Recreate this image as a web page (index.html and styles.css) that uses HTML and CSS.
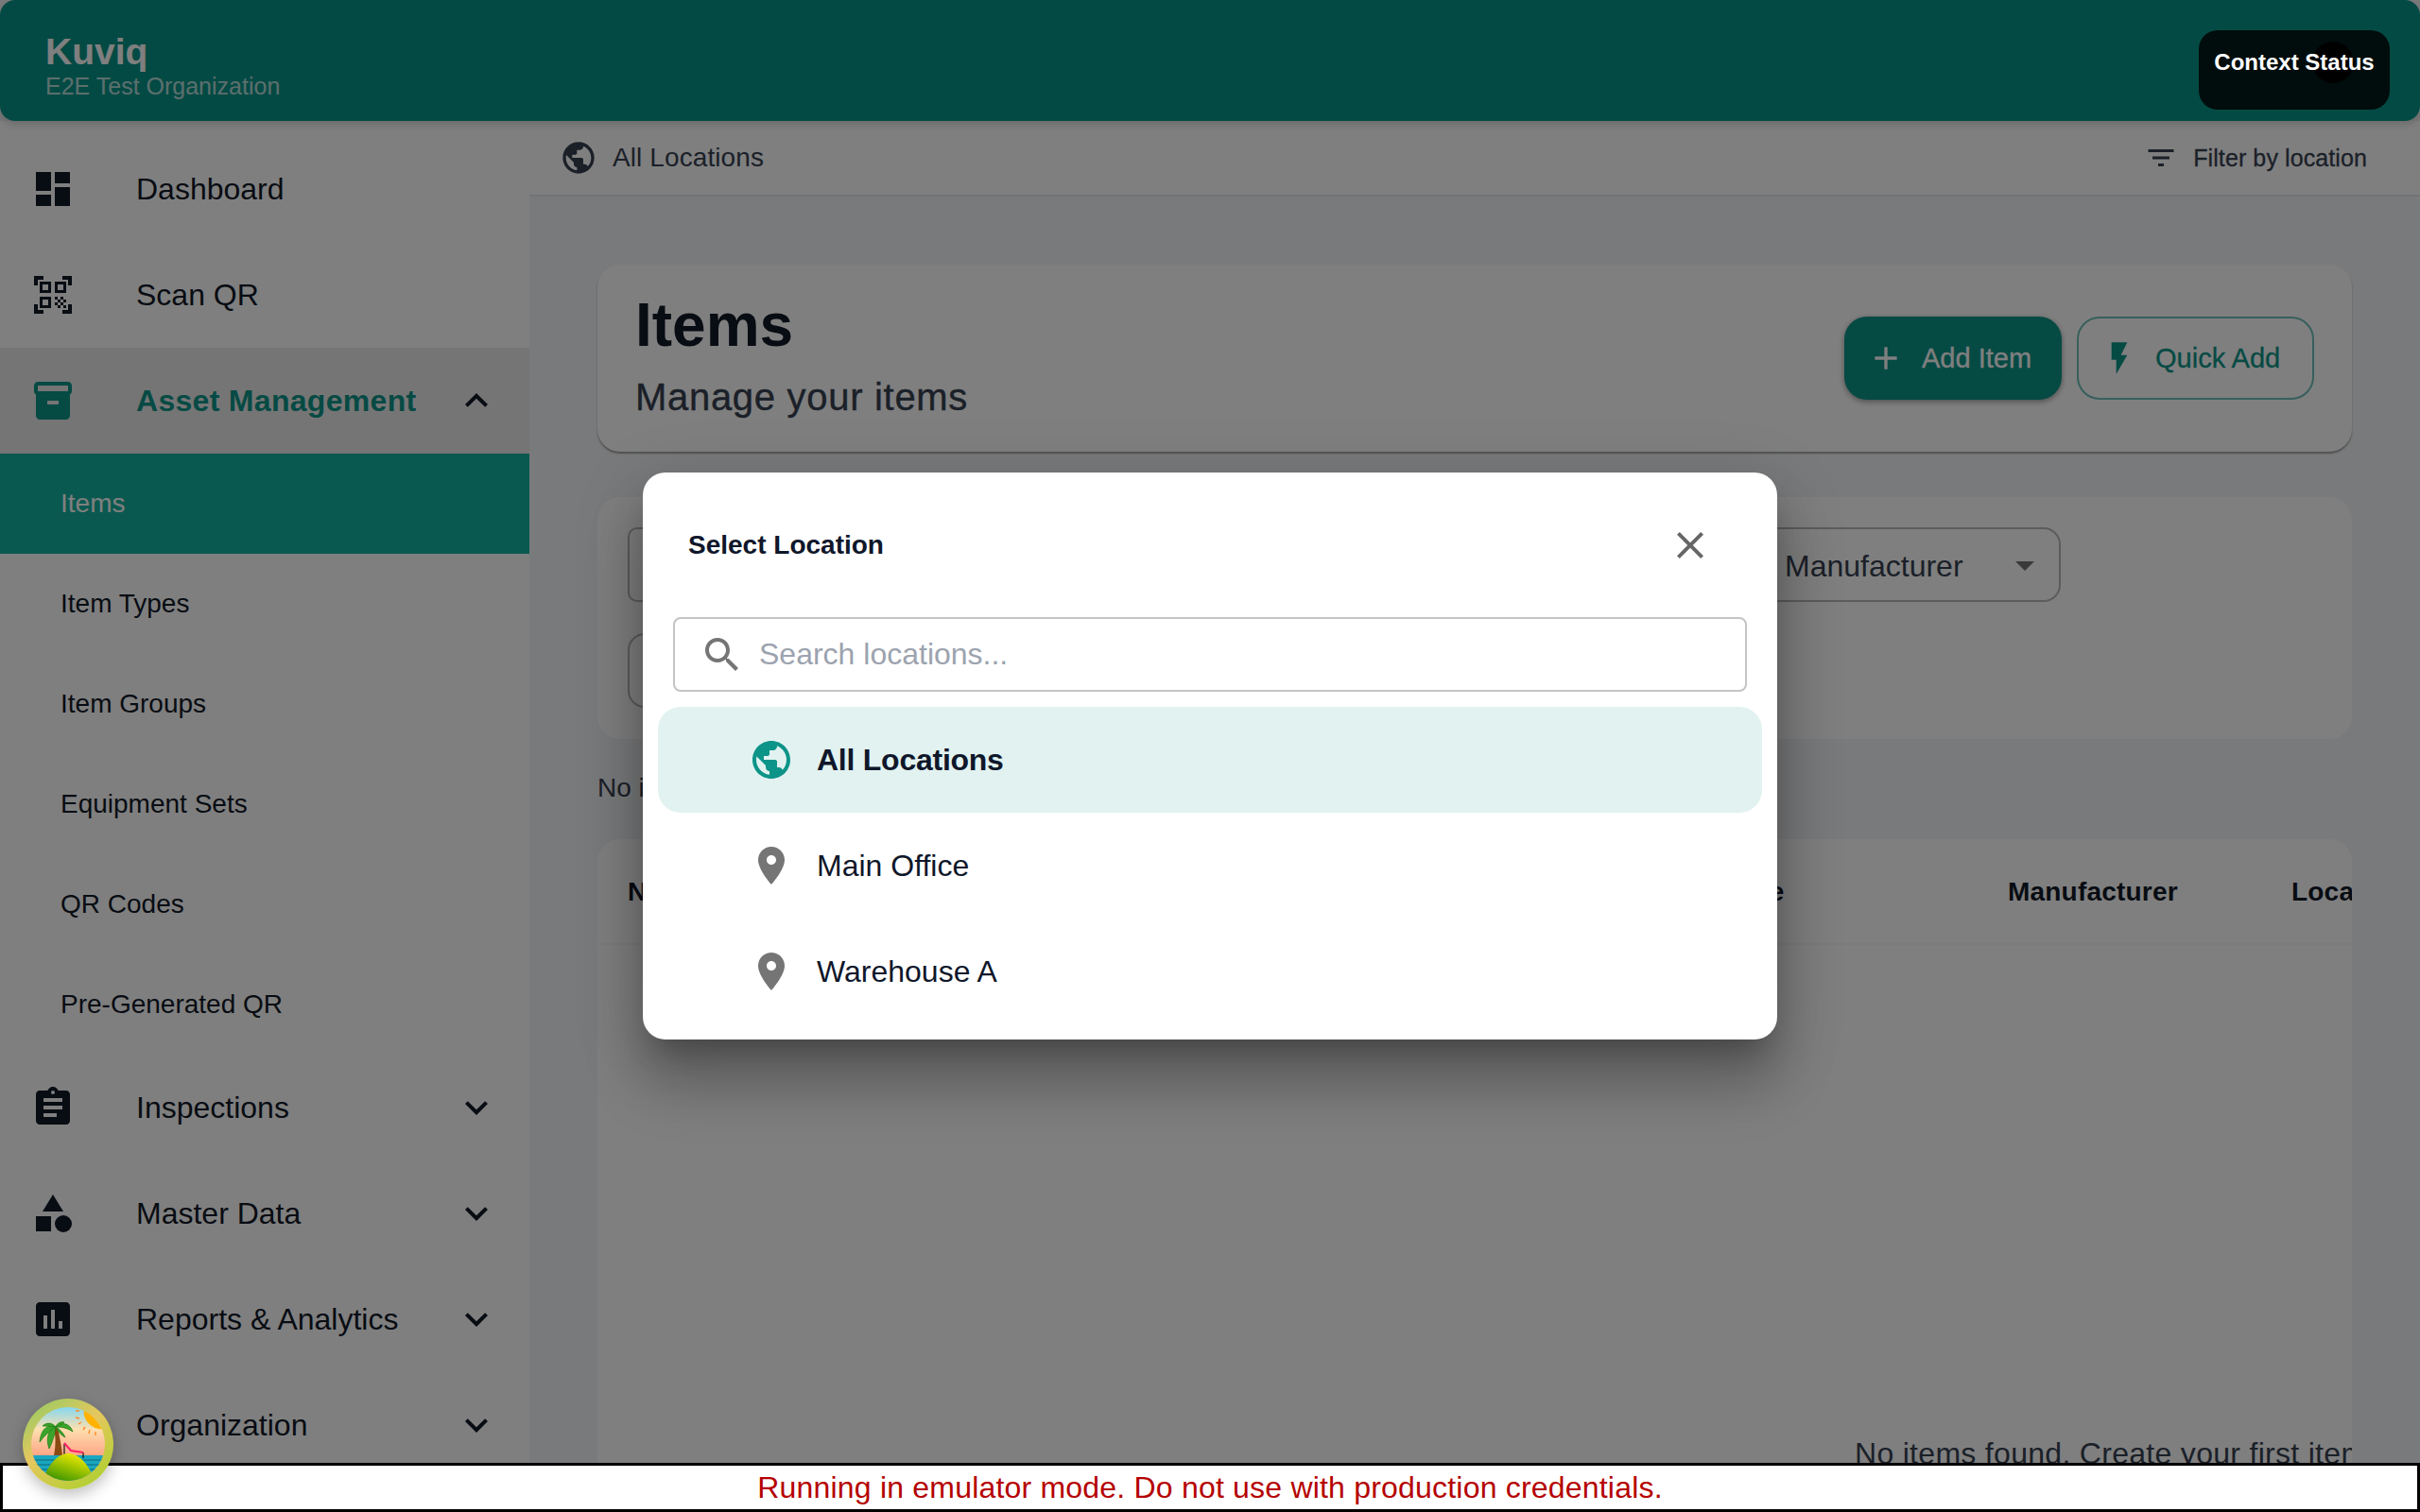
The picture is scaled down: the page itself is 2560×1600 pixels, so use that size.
FILE: index.html
```html
<!DOCTYPE html>
<html lang="en">
<head>
  <meta charset="UTF-8" />
  <title>Kuviq - Items</title>
  <link rel="stylesheet" href="styles.css">
</head>
<body>
  <div class="app">
    <header class="topbar">
      <div class="brand">Kuviq</div>
      <div class="org">E2E Test Organization</div>
    </header>

    <div class="shell">
      <!-- sidebar -->
      <nav class="sidebar">
        <div class="nav-row">
          <svg class="icon" viewBox="0 0 24 24"><path d="M3 13h8V3H3v10zm0 8h8v-6H3v6zm10 0h8V11h-8v10zm0-18v6h8V3h-8z"/></svg>
          <span class="nav-label">Dashboard</span>
        </div>
        <div class="nav-row">
          <svg class="icon" viewBox="0 0 24 24"><path d="M9.5 6.5v3h-3v-3h3M11 5H5v6h6V5zm-1.5 9.5v3h-3v-3h3M11 13H5v6h6v-6zm6.5-6.5v3h-3v-3h3M19 5h-6v6h6V5zm-6 8h1.5v1.5H13V13zm1.5 1.5H16V16h-1.5v-1.5zM16 13h1.5v1.5H16V13zm-3 3h1.5v1.5H13V16zm1.5 1.5H16V19h-1.5v-1.5zM16 16h1.5v1.5H16V16zm1.5-1.5H19V16h-1.5v-1.5zm0 3H19V19h-1.5v-1.5zM22 7h-2V4h-3V2h5v5zm0 15v-5h-2v3h-3v2h5zM2 22h5v-2H4v-3H2v5zM2 2v5h2V4h3V2H2z"/></svg>
          <span class="nav-label">Scan QR</span>
        </div>
        <div class="nav-row open">
          <svg class="icon" viewBox="0 0 24 24"><path d="M20 2H4c-1 0-2 .9-2 2v3.01c0 .72.43 1.34 1 1.69V20c0 1.1 1.1 2 2 2h14c.9 0 2-.9 2-2V8.7c.57-.35 1-.97 1-1.69V4c0-1.1-1-2-2-2zm-5 12H9v-2h6v2zm5-7H4V4l16-.02V7z"/></svg>
          <span class="nav-label">Asset Management</span>
          <svg class="icon chevron" viewBox="0 0 24 24"><path d="M12 8l-6 6 1.41 1.41L12 10.83l4.59 4.58L18 14z"/></svg>
        </div>
        <div class="sub-row active">Items</div>
        <div class="sub-row">Item Types</div>
        <div class="sub-row">Item Groups</div>
        <div class="sub-row">Equipment Sets</div>
        <div class="sub-row">QR Codes</div>
        <div class="sub-row">Pre-Generated QR</div>
        <div class="nav-row">
          <svg class="icon" viewBox="0 0 24 24"><path d="M19 3h-4.18C14.4 1.84 13.3 1 12 1c-1.3 0-2.4.84-2.82 2H5c-1.1 0-2 .9-2 2v14c0 1.1.9 2 2 2h14c1.1 0 2-.9 2-2V5c0-1.1-.9-2-2-2zm-7 0c.55 0 1 .45 1 1s-.45 1-1 1-1-.45-1-1 .45-1 1-1zm2 14H7v-2h7v2zm3-4H7v-2h10v2zm0-4H7V7h10v2z"/></svg>
          <span class="nav-label">Inspections</span>
          <svg class="icon chevron" viewBox="0 0 24 24"><path d="M16.59 8.59L12 13.17 7.41 8.59 6 10l6 6 6-6z"/></svg>
        </div>
        <div class="nav-row">
          <svg class="icon" viewBox="0 0 24 24"><path d="M12 2l-5.5 9h11z"/><circle cx="17.5" cy="17.5" r="4.5"/><path d="M3 13.5h8v8H3z"/></svg>
          <span class="nav-label">Master Data</span>
          <svg class="icon chevron" viewBox="0 0 24 24"><path d="M16.59 8.59L12 13.17 7.41 8.59 6 10l6 6 6-6z"/></svg>
        </div>
        <div class="nav-row">
          <svg class="icon" viewBox="0 0 24 24"><path d="M19 3H5c-1.1 0-2 .9-2 2v14c0 1.1.9 2 2 2h14c1.1 0 2-.9 2-2V5c0-1.1-.9-2-2-2zM9 17H7v-7h2v7zm4 0h-2V7h2v10zm4 0h-2v-4h2v4z"/></svg>
          <span class="nav-label">Reports &amp; Analytics</span>
          <svg class="icon chevron" viewBox="0 0 24 24"><path d="M16.59 8.59L12 13.17 7.41 8.59 6 10l6 6 6-6z"/></svg>
        </div>
        <div class="nav-row">
          <span class="icon"></span>
          <span class="nav-label">Organization</span>
          <svg class="icon chevron" viewBox="0 0 24 24"><path d="M16.59 8.59L12 13.17 7.41 8.59 6 10l6 6 6-6z"/></svg>
        </div>
      </nav>

      <main class="main">
        <div class="location-bar">
          <svg class="icon-40" viewBox="0 0 24 24"><path d="M12 2C6.48 2 2 6.48 2 12s4.48 10 10 10 10-4.48 10-10S17.52 2 12 2zm-1 17.93c-3.95-.49-7-3.85-7-7.93 0-.62.08-1.21.21-1.79L9 15v1c0 1.1.9 2 2 2v1.93zm6.9-2.54c-.26-.81-1-1.39-1.9-1.39h-1v-3c0-.55-.45-1-1-1H8v-2h2c.55 0 1-.45 1-1V7h2c1.1 0 2-.9 2-2v-.41c2.93 1.19 5 4.06 5 7.41 0 2.08-.8 3.97-2.1 5.39z"/></svg>
          <span class="location-name">All Locations</span>
          <div class="filter-btn">
            <svg class="icon-36" viewBox="0 0 24 24"><path d="M10 18h4v-2h-4v2zM3 6v2h18V6H3zm3 7h12v-2H6v2z"/></svg>
            <span>Filter by location</span>
          </div>
        </div>

        <div class="content">
          <section class="card title-card">
            <div class="title-text">
              <h1>Items</h1>
              <p>Manage your items</p>
            </div>
            <div class="actions">
              <div class="btn btn-primary">
                <svg class="icon-40" viewBox="0 0 24 24"><path d="M19 13h-6v6h-2v-6H5v-2h6V5h2v6h6v2z"/></svg>
                <span>Add Item</span>
              </div>
              <div class="btn btn-outline">
                <svg class="icon-40" viewBox="0 0 24 24"><path d="M7 2v11h3v9l7-12h-4l4-8z"/></svg>
                <span>Quick Add</span>
              </div>
            </div>
          </section>

          <section class="card filter-card">
            <div class="filter-row">
              <div class="field field-search"></div>
              <div class="field field-category"></div>
              <div class="field field-select">
                <span>Manufacturer</span>
                <svg class="icon" viewBox="0 0 24 24"><path d="M7 10l5 5 5-5z"/></svg>
              </div>
            </div>
            <div class="filter-row">
              <div class="field field-pill"></div>
            </div>
          </section>

          <p class="count">No items</p>

          <section class="card table-card">
            <div class="table-head">
              <span class="col-name">Name</span>
              <span class="col-type">Item Type</span>
              <span class="col-maker">Manufacturer</span>
              <span>Location</span>
            </div>
            <div class="table-empty">No items found. Create your first item</div>
          </section>
        </div>
      </main>
    </div>
  </div>

  <!-- modal -->
  <div class="scrim">
    <div class="dialog">
      <div class="dialog-head">
        <span>Select Location</span>
        <svg class="icon close" viewBox="0 0 24 24"><path d="M19 6.41L17.59 5 12 10.59 6.41 5 5 6.41 10.59 12 5 17.59 6.41 19 12 13.41 17.59 19 19 17.59 13.41 12z"/></svg>
      </div>
      <div class="search">
        <svg class="icon" viewBox="0 0 24 24"><path d="M15.5 14h-.79l-.28-.27C15.41 12.59 16 11.11 16 9.5 16 5.91 13.09 3 9.5 3S3 5.91 3 9.5 5.91 16 9.5 16c1.61 0 3.09-.59 4.23-1.57l.27.28v.79l5 4.99L20.49 19l-4.99-5zm-6 0C7.01 14 5 11.99 5 9.5S7.01 5 9.5 5 14 7.01 14 9.5 11.99 14 9.5 14z"/></svg>
        <span>Search locations...</span>
      </div>
      <div class="loc-row selected">
        <svg class="icon" viewBox="0 0 24 24"><path d="M12 2C6.48 2 2 6.48 2 12s4.48 10 10 10 10-4.48 10-10S17.52 2 12 2zm-1 17.93c-3.95-.49-7-3.85-7-7.93 0-.62.08-1.21.21-1.79L9 15v1c0 1.1.9 2 2 2v1.93zm6.9-2.54c-.26-.81-1-1.39-1.9-1.39h-1v-3c0-.55-.45-1-1-1H8v-2h2c.55 0 1-.45 1-1V7h2c1.1 0 2-.9 2-2v-.41c2.93 1.19 5 4.06 5 7.41 0 2.08-.8 3.97-2.1 5.39z"/></svg>
        <span>All Locations</span>
      </div>
      <div class="loc-row">
        <svg class="icon" viewBox="0 0 24 24"><path d="M12 2C8.13 2 5 5.13 5 9c0 5.25 7 13 7 13s7-7.75 7-13c0-3.87-3.13-7-7-7zm0 9.5c-1.38 0-2.5-1.12-2.5-2.5s1.12-2.5 2.5-2.5 2.5 1.12 2.5 2.5-1.12 2.5-2.5 2.5z"/></svg>
        <span>Main Office</span>
      </div>
      <div class="loc-row">
        <svg class="icon" viewBox="0 0 24 24"><path d="M12 2C8.13 2 5 5.13 5 9c0 5.25 7 13 7 13s7-7.75 7-13c0-3.87-3.13-7-7-7zm0 9.5c-1.38 0-2.5-1.12-2.5-2.5s1.12-2.5 2.5-2.5 2.5 1.12 2.5 2.5-1.12 2.5-2.5 2.5z"/></svg>
        <span>Warehouse A</span>
      </div>
    </div>
  </div>

  <div class="context-status">
    <span class="context-dot"></span>
    <span class="context-text">Context Status</span>
  </div>

  <div class="emulator-warning">Running in emulator mode. Do not use with production credentials.</div>

  <!-- floating dev tools badge -->
  <div class="bubble">
    <svg viewBox="0 0 96 96" width="96" height="96">
      <defs>
        <linearGradient id="ring" x1="0.1" y1="0" x2="0.8" y2="1">
          <stop offset="0" stop-color="#93cb62"/>
          <stop offset="0.45" stop-color="#e6c75f"/>
          <stop offset="1" stop-color="#aed02e"/>
        </linearGradient>
        <linearGradient id="sky" x1="0" y1="0" x2="0" y2="1">
          <stop offset="0" stop-color="#84d8f0"/>
          <stop offset="0.3" stop-color="#fddfb0"/>
          <stop offset="0.7" stop-color="#ff9f80"/>
        </linearGradient>
        <linearGradient id="hill" x1="0.8" y1="0" x2="0.2" y2="1">
          <stop offset="0" stop-color="#fff200"/>
          <stop offset="1" stop-color="#2f8f00"/>
        </linearGradient>
        <clipPath id="inner"><circle cx="48" cy="48" r="39"/></clipPath>
      </defs>
      <circle cx="48" cy="48" r="48" fill="url(#ring)"/>
      <g clip-path="url(#inner)">
        <rect x="9" y="9" width="78" height="78" fill="url(#sky)"/>
        <circle cx="84" cy="13" r="19.5" fill="#ffb300"/>
        <path d="M56 13h4M56 20l4 1M59 27l3-2M64 33l2-3M70 37l1-4M77 39v-4" stroke="#ff8a2a" stroke-width="1.4"/>
        <rect x="9" y="60" width="78" height="27" fill="#1aa6c0"/>
        <path d="M9 65h78M9 70h78M9 75h78" stroke="#127d90" stroke-width="1.5"/>
        <path d="M33 31h4c2 9 4 19 5 29h-9c2-10 2-19 0-29z" fill="#8a4a12"/>
        <g fill="#3aa52a" stroke="#1f7a16" stroke-width=".7">
          <path d="M35 30c-9-4-16 3-17 16 4-6 10-11 17-16z"/>
          <path d="M35 30c-8 3-11 12-7 23 3-6 6-14 7-23z"/>
          <path d="M35 30c-4-5-10-5-14-1 5 0 10 0 14 1z"/>
          <path d="M35 30c6-6 15-4 18 5-6-4-12-5-18-5z"/>
          <path d="M35 30c1-4 5-6 9-5-3 2-6 4-9 5z"/>
          <path d="M35 30c4 2 8 6 10 11-4-2-8-6-10-11z"/>
        </g>
        <path d="M44 48v12M64 57v6" fill="none" stroke="#111" stroke-width="1.2"/>
        <path d="M44 47l7 8 13 2" fill="none" stroke="#ff1f6b" stroke-width="2"/>
        <path d="M21 88c4-15 15-30 27-30 13 0 24 15 28 30z" fill="url(#hill)"/>
      </g>
    </svg>
  </div>
</body>
</html>
```

FILE: styles.css
```css
* {
  box-sizing: border-box;
}

html, body {
  margin: 0;
  width: 2560px;
  height: 1600px;
  overflow: hidden;
}

body {
  font-family: "Liberation Sans", Arial, sans-serif;
  color: #111827;
  background: #f3f4f6;
  position: relative;
}

svg {
  fill: currentColor;
  flex-shrink: 0;
}

.icon {
  width: 48px;
  height: 48px;
  flex-shrink: 0;
}

.icon-40 {
  width: 40px;
  height: 40px;
}

.icon-36 {
  width: 36px;
  height: 36px;
}

.app {
  display: flex;
  flex-direction: column;
  height: 1600px;
}

/* header */
.topbar {
  height: 128px;
  flex-shrink: 0;
  padding: 32px 48px 0;
  background: #089488;
  border-radius: 16px;
  color: #fff;
  position: relative;
  z-index: 2;
  box-shadow: 0 4px 8px rgba(0, 0, 0, .15);
}

.brand {
  font-size: 39px;
  line-height: 45px;
  font-weight: 700;
}

.org {
  font-size: 25px;
  line-height: 29px;
  opacity: .7;
}

.shell {
  flex: 1;
  display: flex;
  min-height: 0;
}

/* sidebar */
.sidebar {
  width: 560px;
  flex-shrink: 0;
  padding-top: 16px;
  background: #fff;
}

.nav-row {
  height: 112px;
  display: flex;
  align-items: center;
  padding: 0 32px;
}

.nav-row.open {
  background: #ebebeb;
  color: #0d9488;
}

.nav-row.open .nav-label {
  font-weight: 700;
  letter-spacing: .3px;
}

.nav-row.open .chevron {
  color: #111827;
}

.nav-label {
  margin-left: 64px;
  padding-top: 1px;
  font-size: 32px;
  flex: 1;
}

.sub-row {
  height: 106px;
  display: flex;
  align-items: center;
  padding-left: 64px;
  font-size: 28px;
}

.sub-row.active {
  background: #14b3a1;
  color: #fff;
}

/* main */
.main {
  flex: 1;
  min-width: 0;
  display: flex;
  flex-direction: column;
}

.location-bar {
  height: 80px;
  flex-shrink: 0;
  display: flex;
  align-items: center;
  padding: 0 56px 0 32px;
  background: #fff;
  border-bottom: 2px solid #e5e7eb;
  color: #374151;
}

.location-name {
  margin-left: 16px;
  font-size: 28px;
  letter-spacing: .1px;
  flex: 1;
}

.filter-btn {
  display: flex;
  align-items: center;
  gap: 16px;
  font-size: 25px;
  letter-spacing: .1px;
  -webkit-text-stroke: .3px;
}

.content {
  flex: 1;
  padding: 72px 72px 0;
  min-height: 0;
}

.card {
  background: #fff;
  border-radius: 24px;
}

.title-card {
  height: 198px;
  display: flex;
  align-items: center;
  justify-content: space-between;
  padding: 0 40px;
  box-shadow: 0 2px 2px rgba(0, 0, 0, .35);
}

.title-text {
  padding-bottom: 6px;
}

h1 {
  margin: 0 0 14px;
  font-size: 64px;
  line-height: 74px;
  font-weight: 700;
}

.title-text p {
  margin: 0;
  font-size: 40px;
  line-height: 50px;
  letter-spacing: .7px;
  -webkit-text-stroke: .4px;
  color: #374151;
}

.actions {
  display: flex;
  gap: 16px;
}

.btn {
  height: 88px;
  display: flex;
  align-items: center;
  gap: 18px;
  border-radius: 24px;
  font-size: 29px;
  -webkit-text-stroke: .3px;
}

.btn-primary {
  width: 230px;
  padding-left: 24px;
  background: #0d9488;
  color: #fff;
  box-shadow: 0 2px 6px rgba(0, 0, 0, .4);
}

.btn-outline {
  width: 251px;
  padding-left: 23px;
  border: 2px solid rgba(13, 148, 136, .6);
  color: #0d9488;
}

.filter-card {
  margin-top: 48px;
  height: 256px;
  padding: 32px 32px 0;
}

.filter-row {
  display: flex;
  gap: 24px;
  margin-bottom: 33px;
}

.field {
  height: 79px;
  flex-shrink: 0;
  border: 2px solid #b9b9b9;
  border-radius: 18px;
}

.field-search {
  width: 596px;
  border-radius: 10px;
}

.field-category {
  width: 552px;
}

.field-select {
  width: 320px;
  display: flex;
  align-items: center;
  justify-content: space-between;
  padding: 0 12px 0 26px;
  font-size: 32px;
  color: #374151;
}

.field-select span {
  padding-top: 3px;
}

.field-select svg {
  color: #757575;
}

.field-pill {
  width: 400px;
}

.count {
  margin: 34px 0 36px;
  font-size: 28px;
  line-height: 36px;
  color: #374151;
}

.table-card {
  height: 720px;
  overflow: hidden;
}

.table-head {
  height: 112px;
  display: flex;
  align-items: center;
  padding: 2px 0 0 32px;
  border-bottom: 2px solid #f8f8f8;
  font-size: 28px;
  font-weight: 700;
  letter-spacing: .2px;
  white-space: nowrap;
}

.table-head span {
  flex-shrink: 0;
}

.col-name {
  width: 1093px;
}

.col-type {
  width: 367px;
}

.col-maker {
  width: 300px;
}

.table-empty {
  padding: 518px 0 0 1330px;
  font-size: 32px;
  line-height: 40px;
  letter-spacing: .3px;
  white-space: nowrap;
  color: #374151;
}

/* modal */
.scrim {
  position: absolute;
  inset: 0;
  z-index: 10;
  display: flex;
  align-items: center;
  justify-content: center;
  background: rgba(0, 0, 0, .5);
}

.dialog {
  width: 1200px;
  height: 600px;
  padding: 0 16px;
  background: #fff;
  border-radius: 24px;
  box-shadow: 0 22px 30px -14px rgba(0, 0, 0, .25), 0 48px 60px 4px rgba(0, 0, 0, .2), 0 18px 70px 8px rgba(0, 0, 0, .14);
}

.dialog-head {
  height: 153px;
  display: flex;
  align-items: center;
  justify-content: space-between;
  padding: 0 52px 0 32px;
  font-size: 28px;
  font-weight: 700;
  color: #0f172a;
}

.close {
  color: #666;
}

.search {
  height: 79px;
  margin: 0 16px 16px;
  display: flex;
  align-items: center;
  gap: 15px;
  padding: 0 26px;
  border: 2px solid #c4c4c4;
  border-radius: 8px;
  font-size: 32px;
  color: #9ca3af;
}

.search svg {
  color: #757575;
}

.loc-row {
  height: 112px;
  display: flex;
  align-items: center;
  gap: 24px;
  padding-left: 96px;
  border-radius: 24px;
  font-size: 32px;
  color: #0f172a;
}

.loc-row span {
  padding-top: 1px;
}

.loc-row svg {
  color: #757575;
}

.loc-row.selected {
  background: #e1f2f0;
  font-weight: 700;
  letter-spacing: -.25px;
}

.loc-row.selected svg {
  color: #0d9488;
}

/* things above the scrim */
.context-status {
  position: absolute;
  left: 2326px;
  top: 32px;
  z-index: 20;
  width: 202px;
  height: 84px;
  padding-top: 14px;
  background: #000d0c;
  border-radius: 20px;
  color: #fff;
  text-align: center;
  font-size: 24px;
  line-height: 40px;
  font-weight: 700;
}

.context-text {
  position: relative;
}

.context-dot {
  position: absolute;
  left: 120px;
  top: 12px;
  width: 44px;
  height: 44px;
  border-radius: 50%;
  background: #000;
}

.emulator-warning {
  position: absolute;
  left: 0;
  right: 0;
  bottom: 0;
  z-index: 30;
  height: 52px;
  background: #fff;
  border: 3px solid #000;
  color: #b50000;
  text-align: center;
  font-size: 32px;
  line-height: 47px;
  letter-spacing: .2px;
}

.bubble {
  position: absolute;
  left: 24px;
  top: 1480px;
  z-index: 40;
  width: 96px;
  height: 96px;
  border-radius: 50%;
  box-shadow: 0 6px 16px rgba(0, 0, 0, .25);
}
```
